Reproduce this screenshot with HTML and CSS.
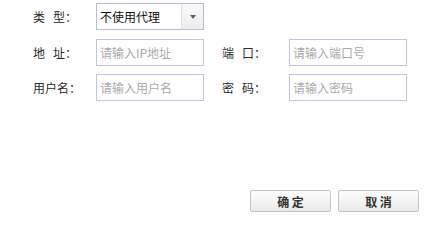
FILE: index.html
```html
<!DOCTYPE html>
<html>
<head>
<meta charset="utf-8">
<link rel="stylesheet" href="styles.css">
</head>
<body>
<div class="form">
  <div class="row">
    <label class="lbl">类&nbsp;&nbsp;&nbsp;型：</label>
    <div class="select">
      <span class="sel-text">不使用代理</span>
      <span class="sel-btn"><span class="arrow"></span></span>
    </div>
  </div>
  <div class="row">
    <label class="lbl">地&nbsp;&nbsp;&nbsp;址：</label>
    <input class="inp" placeholder="请输入IP地址">
    <label class="lbl lbl2">端&nbsp;&nbsp;&nbsp;口：</label>
    <input class="inp inp2" placeholder="请输入端口号">
  </div>
  <div class="row">
    <label class="lbl">用户名：</label>
    <input class="inp" placeholder="请输入用户名">
    <label class="lbl lbl2">密&nbsp;&nbsp;&nbsp;码：</label>
    <input class="inp inp2" type="text" placeholder="请输入密码">
  </div>
</div>
<div class="actions">
  <button class="btn">确 定</button>
  <button class="btn">取 消</button>
</div>
</body>
</html>
```
FILE: styles.css
```css
html, body {
  margin: 0;
  padding: 0;
  background: #fff;
  width: 438px;
  height: 229px;
  overflow: hidden;
  font-family: "Noto Sans CJK SC", "Liberation Sans", sans-serif;
  font-size: 12px;
  color: #333;
}
body {
  display: flex;
  flex-direction: column;
}
.form {
  padding: 3px 0 0 33px;
  display: flex;
  flex-direction: column;
  gap: 8.5px;
}
.row {
  display: flex;
  align-items: center;
  height: 27px;
}
.lbl {
  width: 63px;
  flex: none;
  font-size: 12px;
  color: #2a2a2a;
}
.lbl2 {
  width: 67px;
  margin-left: 18px;
}
.select {
  box-sizing: border-box;
  width: 108px;
  height: 27px;
  border: 1px solid #bdb9dc;
  display: flex;
  align-items: stretch;
}
.sel-text {
  flex: 1;
  display: flex;
  align-items: center;
  padding-left: 3px;
  color: #111;
  font-size: 12px;
}
.sel-btn {
  width: 21px;
  border-left: 1px solid #e2e2e2;
  background: linear-gradient(#fafafa, #ececec);
  display: flex;
  align-items: center;
  justify-content: center;
}
.arrow {
  width: 0;
  height: 0;
  border-left: 3.5px solid transparent;
  border-right: 3.5px solid transparent;
  border-top: 4px solid #46607c;
  margin-top: 1px;
}
.inp {
  box-sizing: border-box;
  width: 108px;
  height: 27px;
  border: 1px solid #c6c3e2;
  padding: 0 0 0 3px;
  margin: 0;
  font-family: inherit;
  font-size: 12px;
  outline: none;
  background: #fff;
}
.inp2 {
  width: 118px;
}
.inp::placeholder {
  color: #aaa;
}
.actions {
  margin-top: 89px;
  padding-right: 19px;
  display: flex;
  justify-content: flex-end;
  gap: 7px;
}
.btn {
  box-sizing: border-box;
  width: 81px;
  height: 22px;
  margin: 0;
  padding: 0;
  border: 1px solid #c4c4c4;
  border-radius: 2px;
  background: linear-gradient(#fdfdfd, #e9e9e9);
  font-family: inherit;
  font-size: 12px;
  font-weight: bold;
  color: #333;
}
```
